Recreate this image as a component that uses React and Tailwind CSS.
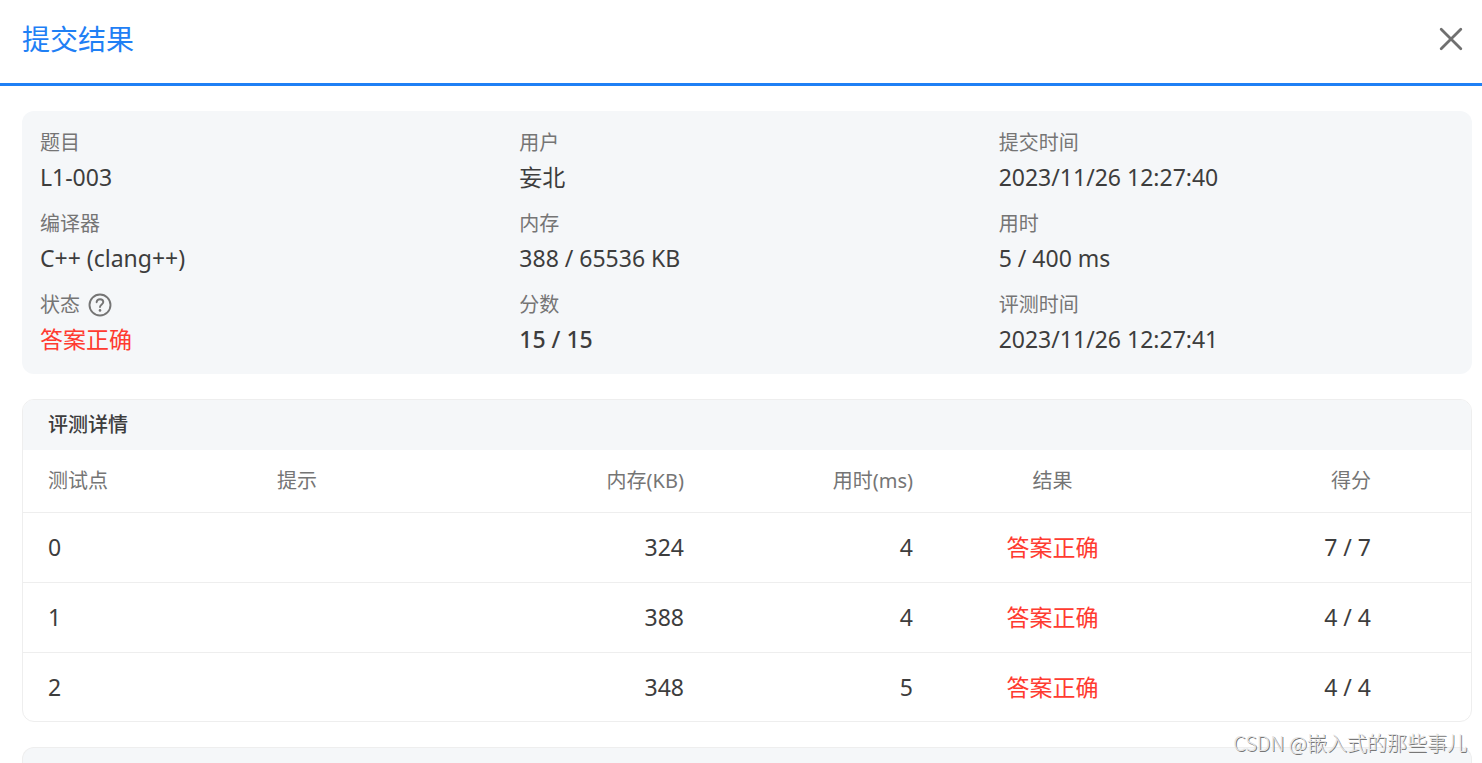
import clsx from "clsx";

const summary = [
  { label: "题目", value: "L1-003" },
  { label: "用户", value: "妄北" },
  { label: "提交时间", value: "2023/11/26 12:27:40" },
  { label: "编译器", value: "C++ (clang++)" },
  { label: "内存", value: "388 / 65536 KB" },
  { label: "用时", value: "5 / 400 ms" },
  { label: "状态", value: "答案正确", help: true, valueClass: "text-[#ff3b30]" },
  { label: "分数", value: "15 / 15", valueClass: "font-medium" },
  { label: "评测时间", value: "2023/11/26 12:27:41" },
];

const cases = [
  { id: 0, memory: 324, time: 4, result: "答案正确", score: "7 / 7" },
  { id: 1, memory: 388, time: 4, result: "答案正确", score: "4 / 4" },
  { id: 2, memory: 348, time: 5, result: "答案正确", score: "4 / 4" },
];

function CloseIcon() {
  return (
    <svg width="24" height="24" viewBox="0 0 24 24" fill="none" stroke="currentColor" strokeWidth="2.8" strokeLinecap="round">
      <path d="M2.2 2.2L21.8 21.8M21.8 2.2L2.2 21.8" />
    </svg>
  );
}

function HelpIcon() {
  return (
    <svg width="24" height="24" viewBox="0 0 24 24" fill="none" stroke="currentColor" strokeWidth="1.9" strokeLinecap="round">
      <circle cx="12" cy="12" r="10.5" />
      <path d="M8.6 9.2C8.8 7.3 10.2 6.2 12 6.2C13.9 6.2 15.3 7.4 15.3 9.1C15.3 11.4 12 11.6 12 14.1" />
      <circle cx="12" cy="17.4" r="1.3" fill="currentColor" stroke="none" />
    </svg>
  );
}

function SummaryItem({ label, value, help, valueClass }) {
  return (
    <div>
      <dt className="flex items-center gap-2 h-[30px] text-[20px] text-[#757575]">
        {label}
        {help && (
          <button type="button" aria-label="帮助" className="cursor-pointer">
            <HelpIcon />
          </button>
        )}
      </dt>
      <dd className={clsx("text-[23px] leading-[38px]", valueClass)}>{value}</dd>
    </div>
  );
}

export default function App() {
  return (
    <div className="relative flex flex-col h-screen overflow-hidden bg-white text-[#3d3d3d] font-['Noto_Sans','Noto_Sans_CJK_SC',sans-serif]">
      <header className="flex items-center justify-between h-[86px] shrink-0 pl-[22px] pr-[19px] pb-[5px] border-b-3 border-[#1f80f5]">
        <h1 className="text-[28px] font-normal text-[#1f80f5]">提交结果</h1>
        <button type="button" aria-label="关闭" className="text-[#707070] cursor-pointer">
          <CloseIcon />
        </button>
      </header>

      <main className="flex-1 flex flex-col gap-[25px] min-h-0 pt-[25px] pl-[22px] pr-[10px]">
        <dl className="grid grid-cols-3 gap-x-6 gap-y-[13px] shrink-0 px-[18px] pt-[17px] pb-4 rounded-xl bg-[#f5f7f9]">
          {summary.map((item) => (
            <SummaryItem key={item.label} {...item} />
          ))}
        </dl>

        <section className="shrink-0 rounded-xl border border-[#eeeeee] overflow-hidden">
          <h2 className="px-[25px] bg-[#f5f7f9] text-[20px] leading-[50px] font-medium">评测详情</h2>
          <table className="w-full table-fixed">
            <thead>
              <tr className="h-[62px] text-[20px] text-[#757575]">
                <th className="w-[229px] px-[25px] text-left font-normal">测试点</th>
                <th className="px-[25px] text-left font-normal">提示</th>
                <th className="w-[229px] px-[25px] text-right font-normal">内存(KB)</th>
                <th className="w-[229px] px-[25px] text-right font-normal">用时(ms)</th>
                <th className="w-[229px] px-[25px] text-center font-normal">结果</th>
                <th className="w-[304px] pr-[100px] text-right font-normal">得分</th>
              </tr>
            </thead>
            <tbody className="text-[23px]">
              {cases.map((c) => (
                <tr key={c.id} className="h-[70px] last:h-[69px] border-t border-[#eeeeee]">
                  <td className="px-[25px]">{c.id}</td>
                  <td className="px-[25px]"></td>
                  <td className="px-[25px] text-right">{c.memory}</td>
                  <td className="px-[25px] text-right">{c.time}</td>
                  <td className="px-[25px] text-center text-[#ff3b30]">{c.result}</td>
                  <td className="pr-[100px] text-right">{c.score}</td>
                </tr>
              ))}
            </tbody>
          </table>
        </section>

        <section className="flex-1 rounded-t-xl border border-b-0 border-[#eeeeee] bg-[#f5f7f9]"></section>
      </main>

      <p className="absolute right-[15px] bottom-[5px] text-[20px] leading-[30px] font-light text-[#e4e4e4] [text-shadow:1px_1px_0_#777777] font-['Noto_Sans_CJK_SC',sans-serif]">CSDN @嵌入式的那些事儿</p>
    </div>
  );
}
